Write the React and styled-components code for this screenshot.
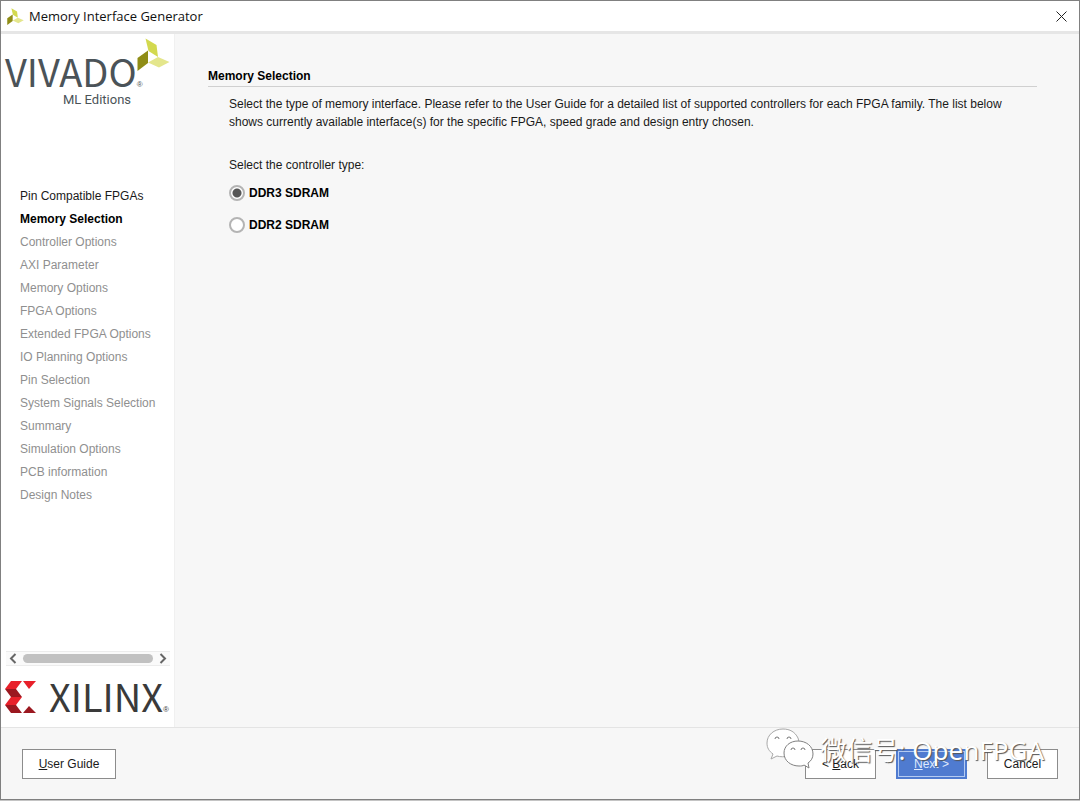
import { useState } from 'react';
import styled, { createGlobalStyle } from 'styled-components';

const steps = [
  'Pin Compatible FPGAs',
  'Memory Selection',
  'Controller Options',
  'AXI Parameter',
  'Memory Options',
  'FPGA Options',
  'Extended FPGA Options',
  'IO Planning Options',
  'Pin Selection',
  'System Signals Selection',
  'Summary',
  'Simulation Options',
  'PCB information',
  'Design Notes',
];

const currentStep = 1;

const controllers = ['DDR3 SDRAM', 'DDR2 SDRAM'];

function VivadoMark({ size }) {
  return (
    <svg width={size} height={size} viewBox="0 0 33 33" aria-hidden="true">
      <path d="M8.500 0.500L19.500 7L21 19L11.500 13Z" fill="#d3d94f" />
      <path d="M0.500 20L11 12.500V25L0.500 33Z" fill="#8f8d16" />
      <path d="M11 24.500L21 19L32.500 24L22 29.500Z" fill="#e4e68c" />
    </svg>
  );
}

function XilinxMark() {
  return (
    <svg width="31" height="32" viewBox="0 0 31 32" aria-hidden="true">
      <path d="M6 0H17L11 8H0Z" fill="#e8202a" />
      <path d="M0 8H11L17 16H6Z" fill="#9b1820" />
      <path d="M6 16H17L11 24H0Z" fill="#e8202a" />
      <path d="M0 24H11L17 32H6Z" fill="#9b1820" />
      <path d="M18 0H31L24 8Z" fill="#e8202a" />
      <path d="M18 32H31L24 25Z" fill="#9b1820" />
    </svg>
  );
}

function WeChatMark() {
  return (
    <svg width="48" height="42" viewBox="0 0 48 42" aria-hidden="true">
      <g fill="#fff" stroke="#a8a8a8" strokeWidth="1">
        <path d="M17 1C8 1 1 7 1 15C1 20 3 23 7 26L5 31L11 28C14 29 19 29 22 28C33 25 34 15 32 10C29 4 24 1 17 1Z" />
        <path
          d="M32 13C24 13 18 18 18 25C18 33 25 38 33 38C35 38 37 38 38 37L43 40L42 35C45 33 47 30 47 26C47 18 40 13 32 13Z"
          stroke="#808080"
        />
      </g>
      <g fill="none" stroke="#777" strokeWidth="1">
        <path d="M9 11A2 2 0 1 1 13 11" />
        <path d="M21 11A2 2 0 1 1 25 11" />
        <path d="M25 22A2 2 0 1 1 29 22" />
        <path d="M35 22A2 2 0 1 1 39 22" />
      </g>
    </svg>
  );
}

function App() {
  const [controller, setController] = useState(controllers[0]);

  return (
    <>
      <GlobalStyle />
      <Desktop>
        <Dialog>
          <TitleBar>
            <VivadoMark size={17} />
            <DialogTitle>Memory Interface Generator</DialogTitle>
            <CloseButton type="button" aria-label="Close">
              <svg width="11" height="11" viewBox="0 0 11 11" stroke="#222" aria-hidden="true">
                <path d="M0.500 0.500L10.500 10.500M10.500 0.500L0.500 10.500" />
              </svg>
            </CloseButton>
          </TitleBar>

          <Body>
            <Sidebar>
              <VivadoLogo>
                <VivadoName>
                  VIVADO<Registered>®</Registered>
                </VivadoName>
                <MarkCorner>
                  <VivadoMark size={33} />
                </MarkCorner>
                <Edition>ML Editions</Edition>
              </VivadoLogo>

              <StepList>
                {steps.map((step, i) => (
                  <Step key={step} $current={i === currentStep} $pending={i > currentStep}>
                    {step}
                  </Step>
                ))}
              </StepList>

              <ScrollBar>
                <ScrollButton type="button" aria-label="Scroll left">
                  <svg width="8" height="11" viewBox="0 0 8 11" aria-hidden="true">
                    <path d="M6.500 1L2 5.500L6.500 10" fill="none" stroke="#666" strokeWidth="2" />
                  </svg>
                </ScrollButton>
                <ScrollThumb />
                <ScrollButton type="button" aria-label="Scroll right">
                  <svg width="8" height="11" viewBox="0 0 8 11" aria-hidden="true">
                    <path d="M1.500 1L6 5.500L1.500 10" fill="none" stroke="#666" strokeWidth="2" />
                  </svg>
                </ScrollButton>
              </ScrollBar>

              <XilinxLogo>
                <XilinxMark />
                <XilinxName>
                  XILINX<Registered>®</Registered>
                </XilinxName>
              </XilinxLogo>
            </Sidebar>

            <Main>
              <Heading>Memory Selection</Heading>
              <Section>
                <Text>
                  Select the type of memory interface. Please refer to the User Guide for a detailed
                  list of supported controllers for each FPGA family. The list below shows currently
                  available interface(s) for the specific FPGA, speed grade and design entry chosen.
                </Text>
                <Choices>
                  <Legend>Select the controller type:</Legend>
                  {controllers.map((name) => (
                    <Choice key={name}>
                      <Radio
                        name="controller"
                        value={name}
                        checked={controller === name}
                        onChange={() => setController(name)}
                      />
                      {name}
                    </Choice>
                  ))}
                </Choices>
              </Section>
            </Main>
          </Body>

          <Footer>
            <Button type="button" $wide>
              <u>U</u>ser Guide
            </Button>
            <Actions>
              <Button type="button">
                &lt; <u>B</u>ack
              </Button>
              <Button type="button" $primary>
                <u>N</u>ext &gt;
              </Button>
              <Button type="button">Cancel</Button>
            </Actions>
            <Watermark>
              <WeChatMark />
              <span>微信号: OpenFPGA</span>
            </Watermark>
          </Footer>
        </Dialog>
      </Desktop>
    </>
  );
}

const GlobalStyle = createGlobalStyle`
  * {
    box-sizing: border-box;
  }

  body {
    margin: 0;
    color: #1a1a1a;
    font-family: "Liberation Sans", Arial, sans-serif;
    font-size: 12px;
  }
`;

const Desktop = styled.div`
  display: flex;
  min-height: 100vh;
  padding-bottom: 1px;
  background: #c4c4c4;
`;

const Dialog = styled.div`
  display: flex;
  flex: 1;
  flex-direction: column;
  border: 1px solid #808080;
  background: #f7f7f7;
`;

const TitleBar = styled.header`
  display: flex;
  align-items: center;
  gap: 5px;
  height: 33px;
  padding: 0 12px 0 6px;
  border-bottom: 3px solid #e6e6e6;
  background: #fff;
`;

const DialogTitle = styled.h1`
  flex: 1;
  margin: 0;
  color: #111;
  font-family: "Open Sans", "Noto Sans", sans-serif;
  font-size: 13px;
  font-weight: 400;
`;

const CloseButton = styled.button`
  display: flex;
  padding: 0;
  border: 0;
  background: none;
`;

const Body = styled.div`
  display: flex;
  flex: 1;
`;

const Sidebar = styled.aside`
  display: flex;
  flex-direction: column;
  width: 174px;
  border-right: 1px solid #f0f0f0;
  background: #fff;
`;

const VivadoLogo = styled.div`
  position: relative;
  padding: 18px 0 0 4px;
  color: #4b5358;
`;

const VivadoName = styled.div`
  padding-bottom: 3px;
  font-family: "Noto Sans CJK SC", sans-serif;
  font-size: 38px;
  font-weight: 400;
  line-height: 37px;
  white-space: nowrap;
`;

const Registered = styled.span`
  font-family: "Liberation Sans", Arial, sans-serif;
  font-size: 8px;
  font-weight: 400;
  line-height: 0;
`;

const MarkCorner = styled.div`
  position: absolute;
  top: 4px;
  right: 4px;
`;

const Edition = styled.div`
  padding-left: 58px;
  font-family: Roboto, sans-serif;
  font-size: 13px;
  font-weight: 400;
  line-height: 16px;
`;

const StepList = styled.ol`
  flex: 1;
  margin: 0;
  padding: 77px 0 0 19px;
  list-style: none;
`;

const Step = styled.li`
  color: ${({ $current, $pending }) => ($current ? '#000' : $pending ? '#8f8f8f' : '#1a1a1a')};
  font-weight: ${({ $current }) => ($current ? 700 : 400)};
  line-height: 23px;
  white-space: nowrap;
`;

const ScrollBar = styled.div`
  display: flex;
  align-items: center;
  gap: 6px;
  height: 15px;
  margin: 0 4px 0 5px;
  padding: 0 3px;
  border: solid #ececec;
  border-width: 1px 0;
  background: #fafafa;
`;

const ScrollButton = styled.button`
  display: flex;
  padding: 0;
  border: 0;
  background: none;
`;

const ScrollThumb = styled.div`
  flex: 1;
  height: 9px;
  border-radius: 5px;
  background: #c1c1c1;
`;

const XilinxLogo = styled.div`
  display: flex;
  align-items: center;
  gap: 13px;
  padding: 12px 0 11px 4px;

  svg {
    flex-shrink: 0;
  }
`;

const XilinxName = styled.div`
  padding-bottom: 3px;
  color: #3a3a3a;
  font-family: "Noto Sans CJK SC", sans-serif;
  font-size: 38px;
  line-height: 35px;
  white-space: nowrap;
`;

const Main = styled.main`
  flex: 1;
  padding: 32px 42px 0 33px;
`;

const Heading = styled.h2`
  margin: 0;
  border-bottom: 1px solid #d0d0d0;
  color: #000;
  font-size: 12px;
  line-height: 20px;
`;

const Section = styled.div`
  padding: 8px 21px 0;
`;

const Text = styled.p`
  margin: 0;
  line-height: 18px;
`;

const Choices = styled.fieldset`
  display: flex;
  flex-direction: column;
  gap: 14px;
  margin: 25px 0 0;
  padding: 0;
  border: 0;
`;

const Legend = styled.legend`
  margin-bottom: 10px;
  padding: 0;
  line-height: 18px;
`;

const Choice = styled.label`
  display: flex;
  align-items: center;
  gap: 4px;
  color: #000;
  font-weight: 700;
  line-height: 18px;
`;

const Radio = styled.input.attrs({ type: 'radio' })`
  width: 16px;
  height: 16px;
  margin: 0;
  border: 2px solid #b4b4b4;
  border-radius: 50%;
  background: #fff;
  appearance: none;

  &:checked {
    background: radial-gradient(#555 0 4px, #fff 5px);
  }
`;

const Footer = styled.footer`
  position: relative;
  display: flex;
  justify-content: space-between;
  padding: 21px 21px 20px;
  border-top: 1px solid #e4e4e4;
`;

const Actions = styled.div`
  display: flex;
  gap: 20px;
`;

const Button = styled.button`
  width: ${({ $wide }) => ($wide ? '94px' : '71px')};
  height: 30px;
  padding: 0;
  border: 1px solid ${({ $primary }) => ($primary ? '#4f7bd0' : '#8c8c8c')};
  outline: ${({ $primary }) => ($primary ? '1px solid #b4cbf2' : 'none')};
  outline-offset: -3px;
  background: ${({ $primary }) => ($primary ? '#4f7bd0' : '#fff')};
  color: ${({ $primary }) => ($primary ? '#dfe9fb' : '#1a1a1a')};
  font-family: inherit;
  font-size: 12px;
`;

const Watermark = styled.div`
  position: absolute;
  top: 0;
  right: 35px;
  display: flex;
  align-items: center;
  gap: 6px;
  color: #fff;
  font-family: "Noto Sans", "Noto Sans CJK SC", sans-serif;
  font-size: 26px;
  pointer-events: none;
  text-shadow: 1px 1px 1px #555;
  white-space: nowrap;
`;

export default App;
